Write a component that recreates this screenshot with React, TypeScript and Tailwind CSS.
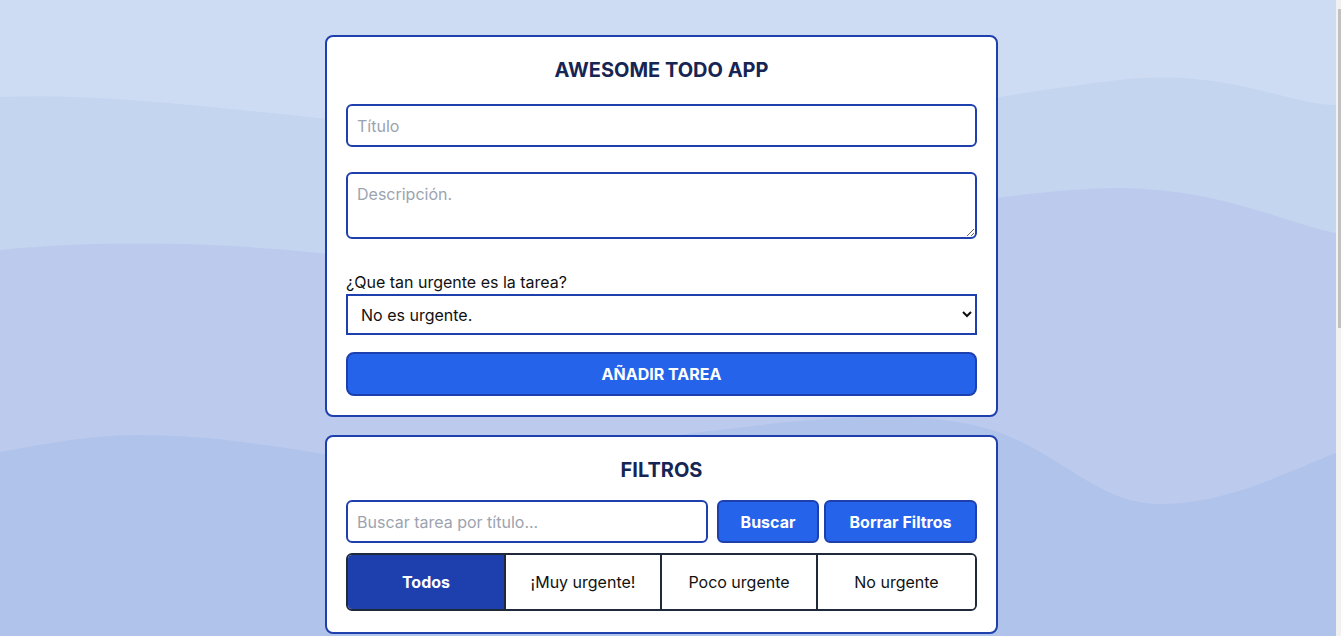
import { useState } from 'react';

const FILTERS = ['Todos', '¡Muy urgente!', 'Poco urgente', 'No urgente'];

function WaveBackground() {
  return (
    <svg
      className="pointer-events-none absolute inset-0 h-full w-full"
      viewBox="0 0 1336 636"
      preserveAspectRatio="none"
      aria-hidden
    >
      <rect width="1336" height="636" fill="#cedcf3" />
      <path
        d="M0,97 C150,90 350,130 600,140 C800,148 900,105 1128,79 C1230,70 1290,105 1336,105 L1336,636 L0,636 Z"
        fill="#c4d5f0"
      />
      <path
        d="M0,250 C120,238 250,245 330,254 C600,285 950,188 1118,188 C1220,188 1290,225 1336,233 L1336,636 L0,636 Z"
        fill="#bccbed"
      />
      <path
        d="M0,452 C50,443 90,435 140,435 C210,435 280,447 330,455 C550,480 850,380 998,432 C1060,454 1100,504 1158,504 C1230,504 1290,470 1336,453 L1336,636 L0,636 Z"
        fill="#b0c3eb"
      />
    </svg>
  );
}

function Card({
  title,
  className = '',
  children,
}: {
  title: string;
  className?: string;
  children: React.ReactNode;
}) {
  return (
    <section
      className={'relative w-[673px] rounded-lg border-2 border-[#1e40af] bg-white px-[19px] pt-[19px] ' + className}
    >
      <h1 className="text-center text-xl font-bold leading-7 text-[#172554]">{title}</h1>
      {children}
    </section>
  );
}

export default function App() {
  const [active, setActive] = useState(0);

  return (
    <div className="flex h-[636px] w-full overflow-hidden font-[Inter,'Noto_Sans',sans-serif] text-base text-[#111]">
      <main className="relative flex flex-1 flex-col items-center pt-[35px] pr-[13px]">
        <WaveBackground />

        <Card title="AWESOME TODO APP" className="pb-[19px]">
          <input
            type="text"
            placeholder="Título"
            className="mt-5 block h-[43px] w-full rounded-md border-2 border-[#1e40af] bg-white px-[9px] placeholder:text-[#9ca3af] focus:outline-none"
          />
          <textarea
            placeholder="Descripción."
            className="mt-[25px] block h-[67px] w-full rounded-md border-2 border-[#1e40af] bg-white px-[9px] py-2 placeholder:text-[#9ca3af] focus:outline-none"
          />
          <label className="mt-[31px] block leading-6">¿Que tan urgente es la tarea?</label>
          <select
            defaultValue="no"
            className="block h-[41px] w-full border-2 border-[#1e40af] bg-white pl-[9px] pr-2 focus:outline-none"
          >
            <option value="no">No es urgente.</option>
            <option value="poco">Poco urgente.</option>
            <option value="muy">¡Muy urgente!</option>
          </select>
          <button
            type="button"
            className="mt-[17px] block h-[44px] w-full rounded-lg border-2 border-[#1e40af] bg-[#2563eb] font-bold text-white"
          >
            AÑADIR TAREA
          </button>
        </Card>

        <div className="mt-[18px]">
          <Card title="FILTROS" className="pb-[21px]">
            <div className="mt-4 flex h-[43px]">
              <input
                type="text"
                placeholder="Buscar tarea por título..."
                className="h-full min-w-0 flex-1 rounded-md border-2 border-[#1e40af] bg-white px-[9px] placeholder:text-[#9ca3af] focus:outline-none"
              />
              <button
                type="button"
                className="ml-[9px] h-full w-[102px] rounded-md border-2 border-[#1e40af] bg-[#2563eb] font-bold text-white"
              >
                Buscar
              </button>
              <button
                type="button"
                className="ml-[5px] h-full w-[153px] rounded-md border-2 border-[#1e40af] bg-[#2563eb] font-bold text-white"
              >
                Borrar Filtros
              </button>
            </div>
            <div className="mt-[10px] grid h-[58px] grid-cols-[156px_156px_156px_1fr] overflow-hidden rounded-md border-2 border-[#1f2937]">
              {FILTERS.map((f, i) => (
                <button
                  key={f}
                  type="button"
                  onClick={() => setActive(i)}
                  className={
                    'h-full ' +
                    (i > 0 ? 'border-l-2 border-[#1f2937] ' : '') +
                    (active === i ? 'bg-[#1e40af] font-bold text-white' : 'bg-white text-[#111]')
                  }
                >
                  {f}
                </button>
              ))}
            </div>
          </Card>
        </div>
      </main>

      {/* scrollbar strip */}
      <div className="w-[5px] shrink-0 bg-[#f1f1f1]">
        <div className="mt-[9px] ml-[2px] h-[319px] w-[3px] bg-[#c1c1c1]" />
      </div>
    </div>
  );
}
